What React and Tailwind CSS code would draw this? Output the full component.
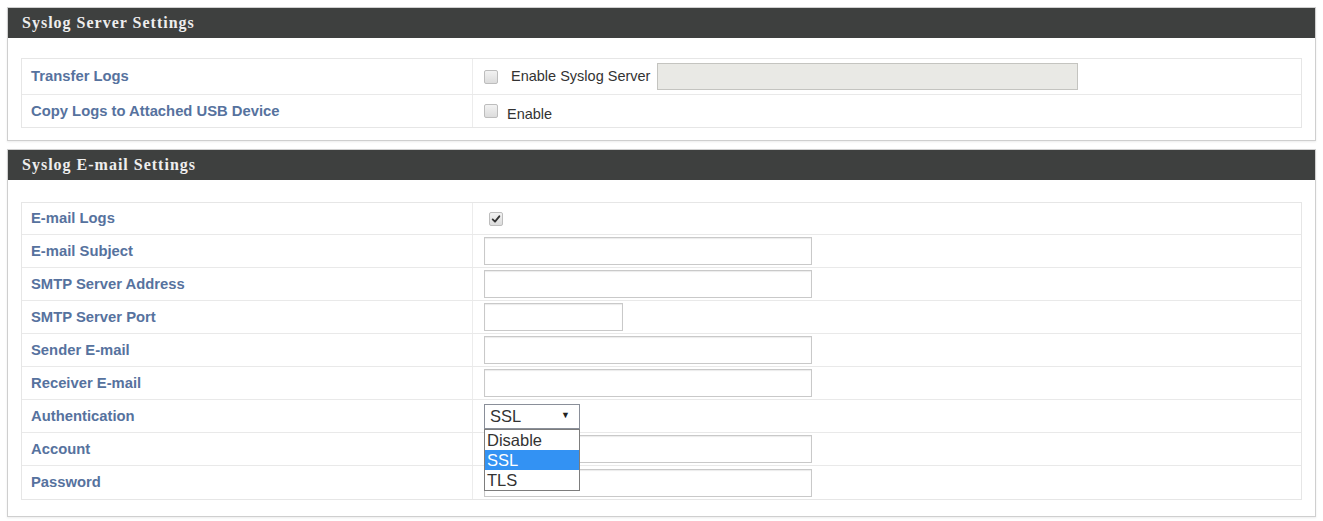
import React from 'react';

const Check = ({ checked }) => (
  <span className="inline-flex w-[14px] h-[14px] shrink-0 items-center justify-center rounded-[2px] border border-[#bdbdbd] bg-gradient-to-b from-[#f2f2f2] to-[#dcdcdc]">
    {checked && (
      <svg viewBox="0 0 12 12" className="w-[10px] h-[10px]">
        <path d="M2 6.5 L4.8 9.2 L10 2.8" fill="none" stroke="#333" strokeWidth="2.2" strokeLinecap="round" strokeLinejoin="round" />
      </svg>
    )}
  </span>
);

const TextBox = ({ w = 'w-[328px]' }) => (
  <div className={`${w} h-[28px] bg-white border border-[#c9c9c9] shadow-[inset_0_1px_1px_rgba(0,0,0,0.08)]`} />
);

const Row = ({ label, children, h = 'h-[33px]', last }) => (
  <div className={`flex ${h} ${last ? '' : 'border-b border-[#e9e9e9]'}`}>
    <div className="w-[451px] shrink-0 flex items-center pl-[9px] border-r border-[#ececec] text-[14.8px] font-bold text-[#56729e]">
      {label}
    </div>
    <div className="flex-1 flex items-center pl-[11px] relative">{children}</div>
  </div>
);

const Panel = ({ title, children, bodyClass }) => (
  <div className="border border-[#cfcfcf] shadow-[0_1px_2px_rgba(0,0,0,0.08)] bg-white">
    <div className="h-[30px] bg-[#3e403f] flex items-center pl-[14px]">
      <span className="font-['Liberation_Serif',serif] font-bold text-[16px] tracking-[1px] text-[#eeeeee]">{title}</span>
    </div>
    <div className={`px-[13px] ${bodyClass}`}>
      <div className="border border-[#e6e6e6]">{children}</div>
    </div>
  </div>
);

export default function App() {
  return (
    <div className="w-[1323px] h-[521px] bg-white px-[7px] pt-[7px] font-['Liberation_Sans',Arial,sans-serif] flex flex-col gap-[8px]">
      <Panel title="Syslog Server Settings" bodyClass="pt-[20px] pb-[12px]">
        <Row label="Transfer Logs" h="h-[36px]">
          <Check />
          <span className="ml-[13px] text-[14.5px] text-[#333]">Enable Syslog Server</span>
          <div className="ml-[7px] w-[421px] h-[27px] bg-[#e9e9e5] border border-[#c4c4c0]" />
        </Row>
        <Row label="Copy Logs to Attached USB Device" h="h-[32px]" last>
          <Check />
          <span className="ml-[9px] mt-[7px] text-[14.5px] text-[#333]">Enable</span>
        </Row>
      </Panel>

      <Panel title="Syslog E-mail Settings" bodyClass="pt-[22px] pb-[16px]">
        <Row label="E-mail Logs" h="h-[32px]">
          <span className="ml-[5px]"><Check checked /></span>
        </Row>
        <Row label="E-mail Subject"><TextBox /></Row>
        <Row label="SMTP Server Address"><TextBox /></Row>
        <Row label="SMTP Server Port"><TextBox w="w-[139px]" /></Row>
        <Row label="Sender E-mail"><TextBox /></Row>
        <Row label="Receiver E-mail"><TextBox /></Row>
        <Row label="Authentication">
          <div className="w-[96px] h-[25px] border border-[#8a8f99] bg-white flex items-center justify-between px-[5px] text-[16.5px] text-[#333]">
            <span>SSL</span>
            <span className="text-[9px] text-[#222] mr-[4px]">▼</span>
          </div>
          <div className="absolute left-[11px] top-[29px] z-10 w-[96px] border border-[#7d7d7d] bg-white text-[16.5px] leading-[20px] text-[#333]">
            <div className="px-[2px]">Disable</div>
            <div className="px-[2px] bg-[#3392f3] text-white">SSL</div>
            <div className="px-[2px]">TLS</div>
          </div>
        </Row>
        <Row label="Account"><TextBox /></Row>
        <Row label="Password" last><TextBox /></Row>
      </Panel>
    </div>
  );
}
